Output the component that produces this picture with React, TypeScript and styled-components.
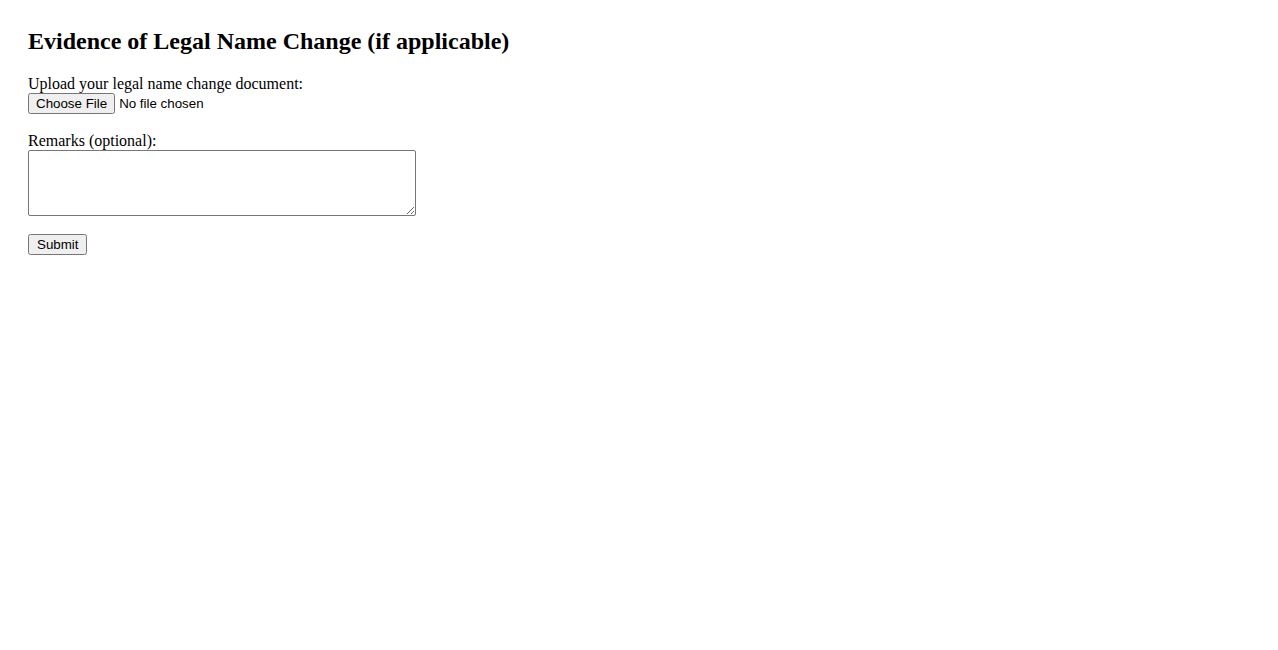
import React from "react";
import styled, { createGlobalStyle } from "styled-components";

const Global = createGlobalStyle`
  body {
    margin: 8px;
    font-family: "Liberation Serif", "Times New Roman", serif;
    font-size: 16px;
    color: #000;
    background: #fff;
  }
`;

const Page = styled.div`
  padding: 20px;
`;

const Title = styled.h2`
  font-family: "Liberation Serif", "Times New Roman", serif;
  font-size: 24px;
  font-weight: bold;
  margin: 0 0 20px;
`;

const Field = styled.div`
  display: flex;
  flex-direction: column;
  align-items: flex-start;
  margin-bottom: 18px;
`;

const Label = styled.label`
  display: block;
  line-height: 18px;
`;

const FileInput = styled.input`
  font-family: "Liberation Sans", Arial, sans-serif;
  font-size: 13.33px;
  margin: 0;
`;

const Remarks = styled.textarea`
  box-sizing: border-box;
  width: 388px;
  height: 66px;
  margin: 0;
  border: 1px solid #767676;
  border-radius: 2px;
  padding: 2px;
  font-family: "Liberation Mono", monospace;
  font-size: 13.33px;
`;

const SubmitButton = styled.button`
  box-sizing: border-box;
  height: 21px;
  padding: 1px 7px;
  font-family: "Liberation Sans", Arial, sans-serif;
  font-size: 13.33px;
  margin: 0;
`;

export default function App() {
  return (
    <>
      <Global />
      <Page>
        <Title>Evidence of Legal Name Change (if applicable)</Title>
        <form onSubmit={(e) => e.preventDefault()}>
          <Field>
            <Label htmlFor="doc">Upload your legal name change document:</Label>
            <FileInput id="doc" type="file" />
          </Field>
          <Field>
            <Label htmlFor="remarks">Remarks (optional):</Label>
            <Remarks id="remarks" />
          </Field>
          <SubmitButton type="submit">Submit</SubmitButton>
        </form>
      </Page>
    </>
  );
}
